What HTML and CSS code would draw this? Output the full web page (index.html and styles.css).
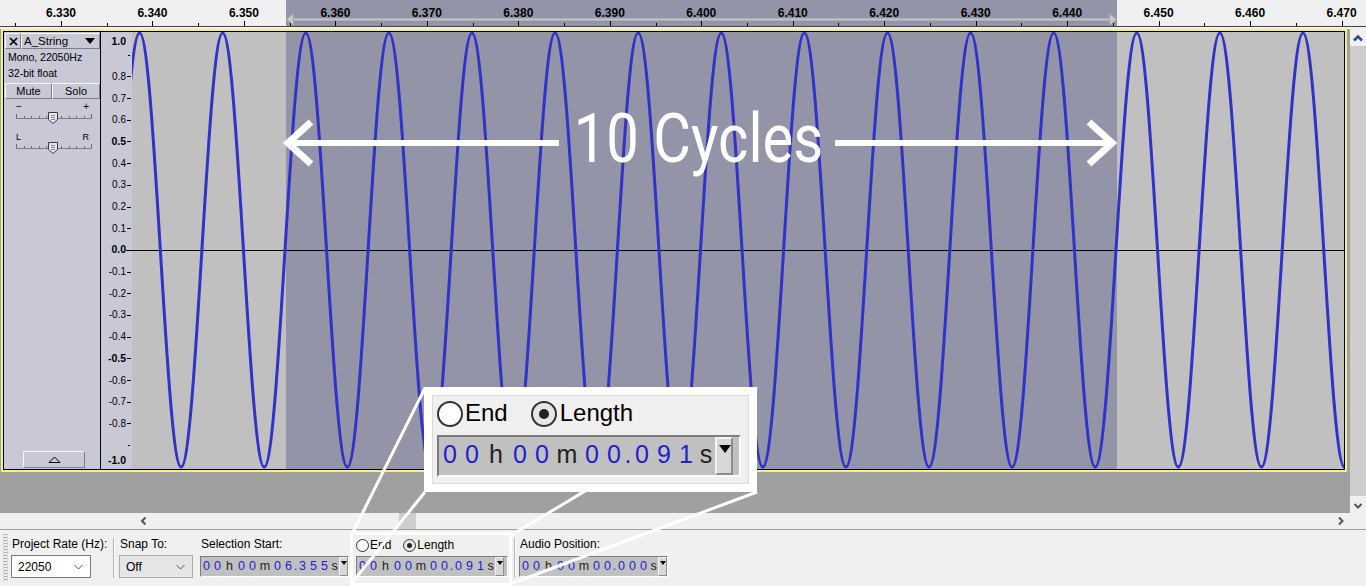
FILE: index.html
```html
<!DOCTYPE html>
<html lang="en">
<head>
    <meta charset="UTF-8">
    <title>A_String - Audacity</title>
    <meta name="viewport" content="width=device-width, initial-scale=1.0">
    <link rel="stylesheet" href="styles.css">
</head>
<body>
<div class="screen">

    <!-- timeline ruler -->
    <div class="ruler">
        <svg class="ruler-sel" width="831" height="26" viewBox="0 0 831 26">
            <line x1="7" y1="19.5" x2="824" y2="19.5" stroke="#c6c6c6" stroke-width="2"/>
            <polygon points="0.5,19.5 7.5,13.5 7.5,25.5" fill="#c8c8c8" stroke="#a6a6a6"/>
            <polygon points="830.5,19.5 823.5,13.5 823.5,25.5" fill="#c8c8c8" stroke="#a6a6a6"/>
        </svg>
        <div class="ruler-ticks">
            <span class="rt">6.330</span>
            <span class="rt">6.340</span>
            <span class="rt">6.350</span>
            <span class="rt">6.360</span>
            <span class="rt">6.370</span>
            <span class="rt">6.380</span>
            <span class="rt">6.390</span>
            <span class="rt">6.400</span>
            <span class="rt">6.410</span>
            <span class="rt">6.420</span>
            <span class="rt">6.430</span>
            <span class="rt">6.440</span>
            <span class="rt">6.450</span>
            <span class="rt">6.460</span>
            <span class="rt">6.470</span>
        </div>
    </div>

    <div class="tracks">
        <div class="track-area">
            <div class="track">
                <div class="track-in">

                    <!-- track control panel -->
                    <div class="tinfo">
                        <div class="ti-title">
                            <span class="ti-close bevel">
                                <svg width="9" height="9" viewBox="0 0 9 9"><path d="M1,1L8,8M8,1L1,8" stroke="#000" stroke-width="1.7"/></svg>
                            </span>
                            <span class="ti-name bevel">A_String<i class="ti-caret"></i></span>
                        </div>
                        <div class="ti-info">
                            <div>Mono, 22050Hz</div>
                            <div>32-bit float</div>
                        </div>
                        <div class="ti-buttons">
                            <span class="ti-btn bevel mute">Mute</span>
                            <span class="ti-btn bevel">Solo</span>
                        </div>
                        <div class="slider">
                            <div class="slider-labels"><span>&minus;</span><span>+</span></div>
                            <svg width="78" height="13" viewBox="0 0 78 13">
                                <line x1="0" y1="6.5" x2="76" y2="6.5" stroke="#7c7c84"/>
                                <path d="M0.5,2v4M8.5,4v2M15.5,4v2M23.5,4v2M30.5,4v2M45.5,4v2M53.5,4v2M60.5,4v2M68.5,4v2M75.5,2v4" stroke="#6c6c74"/>
                                <polygon points="32.5,0.5 41.5,0.5 41.5,7.5 37,11.5 32.5,7.5" fill="#e6e6ee" stroke="#3a3a40"/>
                                <path d="M35,3.5h4M35,5.5h4M35,7.5h4" stroke="#8a8a92"/>
                            </svg>
                        </div>
                        <div class="slider pan">
                            <div class="slider-labels"><span>L</span><span>R</span></div>
                            <svg width="78" height="13" viewBox="0 0 78 13">
                                <line x1="0" y1="6.5" x2="76" y2="6.5" stroke="#7c7c84"/>
                                <path d="M0.5,2v4M8.5,4v2M15.5,4v2M23.5,4v2M30.5,4v2M45.5,4v2M53.5,4v2M60.5,4v2M68.5,4v2M75.5,2v4" stroke="#6c6c74"/>
                                <polygon points="32.5,0.5 41.5,0.5 41.5,7.5 37,11.5 32.5,7.5" fill="#e6e6ee" stroke="#3a3a40"/>
                                <path d="M35,3.5h4M35,5.5h4M35,7.5h4" stroke="#8a8a92"/>
                            </svg>
                        </div>
                        <div class="ti-collapse bevel">
                            <svg width="13" height="7" viewBox="0 0 13 7"><polygon points="1,6.5 6.5,1 12,6.5" fill="none" stroke="#000"/></svg>
                        </div>
                    </div>

                    <!-- amplitude ruler -->
                    <div class="vruler">
                        <span class="vr-end top">1.0</span>
                        <div class="vr-list">
                            <span class="vr mark"></span>
                            <span class="vr">0.8</span>
                            <span class="vr">0.7</span>
                            <span class="vr">0.6</span>
                            <span class="vr bold">0.5</span>
                            <span class="vr">0.4</span>
                            <span class="vr">0.3</span>
                            <span class="vr">0.2</span>
                            <span class="vr">0.1</span>
                            <span class="vr bold zero">0.0</span>
                            <span class="vr">-0.1</span>
                            <span class="vr">-0.2</span>
                            <span class="vr">-0.3</span>
                            <span class="vr">-0.4</span>
                            <span class="vr bold">-0.5</span>
                            <span class="vr">-0.6</span>
                            <span class="vr">-0.7</span>
                            <span class="vr">-0.8</span>
                            <span class="vr mark"></span>
                        </div>
                        <span class="vr-end bottom">-1.0</span>
                    </div>

                    <!-- waveform -->
                    <div class="wave">
                        <svg width="1212" height="437" viewBox="0 0 1212 437">
                            <rect x="154" y="0" width="831" height="437" fill="#9494a8"/>
                            <line x1="0" y1="218.5" x2="1212" y2="218.5" stroke="#000"/>
                            <path fill="none" stroke="#3232c8" stroke-width="3"
                                d="M-13.2,218 c6.776,-111.2 13.256,-217 20.775,-217 s13.999,105.8 20.775,217 s13.256,217 20.775,217 s13.999,-105.8 20.775,-217
                                   s13.256,-217 20.775,-217 s13.999,105.8 20.775,217 s13.256,217 20.775,217 s13.999,-105.8 20.775,-217
                                   s13.256,-217 20.775,-217 s13.999,105.8 20.775,217 s13.256,217 20.775,217 s13.999,-105.8 20.775,-217
                                   s13.256,-217 20.775,-217 s13.999,105.8 20.775,217 s13.256,217 20.775,217 s13.999,-105.8 20.775,-217
                                   s13.256,-217 20.775,-217 s13.999,105.8 20.775,217 s13.256,217 20.775,217 s13.999,-105.8 20.775,-217
                                   s13.256,-217 20.775,-217 s13.999,105.8 20.775,217 s13.256,217 20.775,217 s13.999,-105.8 20.775,-217
                                   s13.256,-217 20.775,-217 s13.999,105.8 20.775,217 s13.256,217 20.775,217 s13.999,-105.8 20.775,-217
                                   s13.256,-217 20.775,-217 s13.999,105.8 20.775,217 s13.256,217 20.775,217 s13.999,-105.8 20.775,-217
                                   s13.256,-217 20.775,-217 s13.999,105.8 20.775,217 s13.256,217 20.775,217 s13.999,-105.8 20.775,-217
                                   s13.256,-217 20.775,-217 s13.999,105.8 20.775,217 s13.256,217 20.775,217 s13.999,-105.8 20.775,-217
                                   s13.256,-217 20.775,-217 s13.999,105.8 20.775,217 s13.256,217 20.775,217 s13.999,-105.8 20.775,-217
                                   s13.256,-217 20.775,-217 s13.999,105.8 20.775,217 s13.256,217 20.775,217 s13.999,-105.8 20.775,-217
                                   s13.256,-217 20.775,-217 s13.999,105.8 20.775,217 s13.256,217 20.775,217 s13.999,-105.8 20.775,-217
                                   s13.256,-217 20.775,-217 s13.999,105.8 20.775,217 s13.256,217 20.775,217 s13.999,-105.8 20.775,-217
                                   s13.256,-217 20.775,-217 s13.999,105.8 20.775,217 s13.256,217 20.775,217 s13.999,-105.8 20.775,-217"/>
                        </svg>
                    </div>
                </div>
            </div>
        </div>

        <div class="vscroll">
            <span class="sb-btn">
                <svg width="16" height="16" viewBox="0 0 16 16"><polyline points="4,10.5 8,6.5 12,10.5" fill="none" stroke="#2a4aa0" stroke-width="2.6"/></svg>
            </span>
            <span class="sb-thumb"></span>
            <span class="sb-btn">
                <svg width="16" height="16" viewBox="0 0 16 16"><polyline points="4.5,7 8,10.5 11.5,7" fill="none" stroke="#555" stroke-width="2"/></svg>
            </span>
        </div>
    </div>

    <div class="hscroll">
        <span class="hs-pad"></span>
        <span class="sb-btn">
            <svg width="16" height="16" viewBox="0 0 16 16"><polyline points="9.5,4.5 6,8 9.5,11.5" fill="none" stroke="#555" stroke-width="2"/></svg>
        </span>
        <span class="hs-track"><span class="hs-thumb"></span></span>
        <span class="sb-btn">
            <svg width="16" height="16" viewBox="0 0 16 16"><polyline points="6,4.5 9.5,8 6,11.5" fill="none" stroke="#555" stroke-width="2"/></svg>
        </span>
        <span class="hs-corner"></span>
    </div>

    <!-- selection toolbar -->
    <div class="toolbar">
        <div class="grip"></div>
        <div class="tb-group rate">
            <div class="tb-label">Project Rate (Hz):</div>
            <div class="combo">
                <span>22050</span>
                <svg width="9" height="6" viewBox="0 0 9 6"><polyline points="0.5,1 4.5,5 8.5,1" fill="none" stroke="#555"/></svg>
            </div>
        </div>
        <div class="tb-sep"></div>
        <div class="tb-group snap">
            <div class="tb-label">Snap To:</div>
            <div class="combo off">
                <span>Off</span>
                <svg width="9" height="6" viewBox="0 0 9 6"><polyline points="0.5,1 4.5,5 8.5,1" fill="none" stroke="#555"/></svg>
            </div>
        </div>
        <div class="tb-group start">
            <div class="tb-label">Selection Start:</div>
            <div class="tc">
                <span class="d">0</span><span class="d">0</span><span class="u uh">h</span><span class="d">0</span><span class="d">0</span><span class="u um">m</span><span class="d">0</span><span class="d">6</span><span class="dot">.</span><span class="d">3</span><span class="d">5</span><span class="d">5</span><span class="u us">s</span><span class="tc-btn"></span>
            </div>
        </div>
        <div class="len-frame">
            <div class="len-box">
                <div class="len-radios">
                    <span class="radio"></span><span>End</span>
                    <span class="radio on gap"></span><span>Length</span>
                </div>
                <div class="tc">
                    <span class="d">0</span><span class="d">0</span><span class="u uh">h</span><span class="d">0</span><span class="d">0</span><span class="u um">m</span><span class="d">0</span><span class="d">0</span><span class="dot">.</span><span class="d">0</span><span class="d">9</span><span class="d">1</span><span class="u us">s</span><span class="tc-btn"></span>
                </div>
            </div>
        </div>
        <div class="tb-sep"></div>
        <div class="tb-group position">
            <div class="tb-label">Audio Position:</div>
            <div class="tc">
                <span class="d">0</span><span class="d">0</span><span class="u uh">h</span><span class="d">0</span><span class="d">0</span><span class="u um">m</span><span class="d">0</span><span class="d">0</span><span class="dot">.</span><span class="d">0</span><span class="d">0</span><span class="d">0</span><span class="u us">s</span><span class="tc-btn"></span>
            </div>
        </div>
    </div>

    <!-- annotations -->
    <svg class="zoom-lines" width="1366" height="586" viewBox="0 0 1366 586">
        <line x1="425" y1="388" x2="351" y2="536"/>
        <line x1="425" y1="492" x2="351" y2="584"/>
        <line x1="757" y1="388" x2="510" y2="536"/>
        <line x1="757" y1="492" x2="510" y2="584"/>
    </svg>

    <div class="callout">
        <div class="len-box">
            <div class="len-radios">
                <span class="radio"></span><span>End</span>
                <span class="radio on gap"></span><span>Length</span>
            </div>
            <div class="tc">
                <span class="d">0</span><span class="d">0</span><span class="u uh">h</span><span class="d">0</span><span class="d">0</span><span class="u um">m</span><span class="d">0</span><span class="d">0</span><span class="dot">.</span><span class="d">0</span><span class="d">9</span><span class="d">1</span><span class="u us">s</span><span class="tc-btn"></span>
            </div>
        </div>
    </div>

    <div class="cycles">
        <svg width="276" height="69" viewBox="0 0 276 69">
            <line x1="8" y1="39" x2="276" y2="39" stroke="#fff" stroke-width="6"/>
            <polyline points="28,18 5,39 28,60" fill="none" stroke="#fff" stroke-width="7"/>
        </svg>
        <div class="cycles-text"><span>10 Cycles</span></div>
        <svg width="282" height="69" viewBox="0 0 282 69">
            <line x1="0" y1="39" x2="274" y2="39" stroke="#fff" stroke-width="6"/>
            <polyline points="254,18 277,39 254,60" fill="none" stroke="#fff" stroke-width="7"/>
        </svg>
    </div>
</div>
</body>
</html>
```

FILE: styles.css
```css
:root {
    --ui: #f0f0f0;
    --panel: #c8c8d6;
    --gray: #a0a0a0;
    --yellow: #f3ef8e;
    --digit: #2020d0;
}

body {
    margin: 0;
    background: var(--ui);
    font-family: "Liberation Sans", Arial, sans-serif;
    color: #000;
}

.screen {
    position: relative;
    width: 1366px;
    height: 586px;
    overflow: hidden;
}

/* timeline ruler */
.ruler {
    position: relative;
    height: 26px;
    border-bottom: 1px solid #444;
    margin-bottom: 2px;
    overflow: hidden;
    background: linear-gradient(to right, var(--ui) 286px, #9494a8 286px, #9494a8 1117px, var(--ui) 1117px);
}

.ruler-sel {
    position: absolute;
    left: 286px;
    top: 0;
}

.ruler-ticks {
    position: relative;
    display: flex;
    height: 26px;
    padding-left: 15.26px;
}

.rt {
    position: relative;
    flex: none;
    width: 91.48px;
    box-sizing: border-box;
    padding-top: 6px;
    text-align: center;
    font-weight: bold;
    font-size: 12px;
    line-height: 14px;
}

.rt::before,
.rt::after {
    content: "";
    position: absolute;
    bottom: 0;
    width: 1px;
    background: #000;
}

.rt::before {
    left: 0;
    height: 3px;
}

.rt::after {
    left: 50%;
    height: 5px;
}

/* tracks */
.tracks {
    display: flex;
    height: 484px;
}

.track-area {
    width: 1350px;
    box-sizing: border-box;
    padding-left: 1px;
    background: var(--gray);
}

.track {
    width: 1346px;
    height: 443px;
    box-sizing: border-box;
    border: 2px solid var(--yellow);
}

.track-in {
    display: flex;
    height: 100%;
    box-sizing: border-box;
    border: 1px solid #000;
}

.bevel {
    box-sizing: border-box;
    border: 1px solid;
    border-color: #f4f4fa #7e7e8a #7e7e8a #f4f4fa;
}

.tinfo {
    width: 96px;
    border-right: 1px solid #000;
    background: var(--panel);
    display: flex;
    flex-direction: column;
    font-size: 11px;
}

.ti-title {
    display: flex;
    height: 16px;
    margin: 1px 0 0 1px;
}

.ti-close {
    width: 16px;
    display: flex;
    align-items: center;
    justify-content: center;
}

.ti-name {
    flex: 1;
    display: flex;
    align-items: center;
    justify-content: space-between;
    padding: 0 4px 0 2px;
    font-size: 11.5px;
}

.ti-caret {
    width: 0;
    height: 0;
    border-left: 5px solid transparent;
    border-right: 5px solid transparent;
    border-top: 6px solid #000;
}

.ti-info {
    padding-left: 4px;
    font-size: 10.5px;
    line-height: 16px;
}

.ti-buttons {
    display: flex;
    height: 16px;
    margin: 2px 0 0 1px;
}

.ti-btn {
    flex: 1;
    display: flex;
    align-items: center;
    justify-content: center;
}

.ti-btn.mute {
    flex: none;
    width: 47px;
}

.slider {
    width: 78px;
    margin: 3px 0 0 12px;
}

.slider.pan {
    margin-top: 7px;
}

.slider-labels {
    display: flex;
    justify-content: space-between;
    width: 76px;
    box-sizing: border-box;
    padding-right: 3px;
    font-size: 10px;
    line-height: 10px;
}

.slider.pan .slider-labels {
    font-size: 9px;
}

.slider svg {
    display: block;
}

.ti-collapse {
    width: 62px;
    height: 17px;
    margin: auto 0 1px 19px;
    display: flex;
    align-items: center;
    justify-content: center;
}

/* amplitude ruler */
.vruler {
    position: relative;
    width: 31px;
    background: var(--panel);
    font-size: 10px;
}

.vr-list {
    display: flex;
    flex-direction: column;
    padding-top: 11.85px;
}

.vr {
    position: relative;
    height: 21.7px;
    display: flex;
    align-items: center;
    justify-content: flex-end;
    padding-right: 6px;
    line-height: 11px;
}

.vr::after {
    content: "";
    position: absolute;
    right: 1px;
    top: 50%;
    width: 4px;
    height: 1px;
    background: #000;
}

.vr.bold,
.vr-end {
    font-weight: bold;
    font-size: 10.5px;
}

.vr.zero::after {
    right: 0;
    width: 6px;
}

.vr.mark::after {
    right: 2px;
    width: 2px;
}

.vr-end {
    position: absolute;
    right: 6px;
    line-height: 12px;
}

.vr-end.top {
    top: 3px;
}

.vr-end.bottom {
    bottom: 3px;
}

.wave {
    flex: 1;
    overflow: hidden;
    background: #c0c0c0;
}

.wave svg {
    display: block;
}

/* scrollbars */
.vscroll {
    width: 16px;
    display: flex;
    flex-direction: column;
    background: var(--ui);
}

.sb-btn {
    flex: none;
    width: 16px;
    height: 17px;
    display: flex;
    align-items: center;
    justify-content: center;
}

.sb-thumb {
    flex: 1;
    background: #cdcdcd;
}

.hscroll {
    display: flex;
    height: 16px;
    background: var(--ui);
}

.hscroll .sb-btn {
    height: 16px;
}

.hs-pad {
    width: 136px;
}

.hs-track {
    flex: 1;
    display: flex;
}

.hs-thumb {
    width: 17px;
    margin-left: 247px;
    background: #cdcdcd;
}

.hs-corner {
    width: 17px;
}

/* selection toolbar */
.toolbar {
    display: flex;
    align-items: flex-start;
    height: 56px;
    border-top: 1px solid var(--gray);
    font-size: 12px;
}

.grip {
    width: 3px;
    height: 48px;
    margin: 4px 0 0 3px;
    border-left: 1px solid #d8d8d8;
    border-right: 1px solid #d8d8d8;
    background: repeating-linear-gradient(to bottom, #a8a8a8 0 1px, transparent 1px 3px);
}

.tb-group {
    margin: 6px 0 0 7px;
}

.tb-group.rate {
    width: 100px;
    margin-left: 3px;
}

.tb-group.snap {
    width: 74px;
    margin-left: 4px;
}

.tb-group.position {
    margin-left: 3px;
}

.tb-label {
    height: 16px;
    line-height: 16px;
    padding-left: 1px;
    white-space: nowrap;
}

.tb-sep {
    width: 1px;
    height: 40px;
    margin: 8px 0 0 2px;
    background: #b4b4b4;
    border-right: 1px solid #fff;
}

.combo {
    display: flex;
    align-items: center;
    justify-content: space-between;
    width: 80px;
    height: 23px;
    margin-top: 3px;
    box-sizing: border-box;
    padding: 0 7px 0 6px;
    background: #fff;
    border: 1px solid #7a7a7a;
}

.combo.off {
    width: 74px;
    background: #e5e5e5;
    border-color: #adadad;
}

.tb-group .tc {
    margin-top: 4px;
}

.tc {
    display: flex;
    align-items: center;
    height: 21px;
    box-sizing: border-box;
    border: 1px solid;
    border-color: #7c7c7c #ffffff #ffffff #7c7c7c;
    background: #c0c0c0;
    font-size: 12.5px;
    line-height: 15px;
}

.tc .d,
.tc .dot {
    color: var(--digit);
    text-align: center;
}

.tc .d {
    width: 11px;
}

.tc .dot {
    width: 3px;
    display: flex;
    justify-content: center;
}

.tc .u {
    color: #222;
    text-align: center;
}

.tc .uh {
    width: 13px;
}

.tc .um {
    width: 14px;
}

.tc .us {
    width: 9px;
}

.tc-btn {
    align-self: stretch;
    width: 9px;
    box-sizing: border-box;
    border: 1px solid;
    border-color: #f4f4f4 #8c8c8c #8c8c8c #f4f4f4;
    background: #d8d8d8;
    display: flex;
    justify-content: center;
    padding-top: 3px;
}

.tc-btn::after {
    content: "";
    width: 0;
    height: 0;
    border-left: 3.5px solid transparent;
    border-right: 3.5px solid transparent;
    border-top: 4px solid #000;
}

/* End / Length group and its zoomed copy */
.len-frame {
    width: 162px;
    height: 54px;
    margin: 2px 0 0 1px;
    box-sizing: border-box;
    border: 3px solid #fff;
    padding: 2px 0 0 3px;
}

.len-box {
    width: 152px;
}

.len-radios {
    display: flex;
    align-items: center;
    height: 16px;
    font-size: 12px;
}

.radio {
    width: 13px;
    height: 13px;
    box-sizing: border-box;
    margin-right: 1px;
    border: 1px solid #333;
    border-radius: 50%;
    background: #fff;
    display: flex;
    align-items: center;
    justify-content: center;
}

.radio.gap {
    margin-left: 12px;
}

.radio.on {
    background: #e6e6e6;
}

.radio.on::after {
    content: "";
    width: 5px;
    height: 5px;
    border-radius: 50%;
    background: #222;
}

.len-box .tc {
    margin-top: 3px;
}

.zoom-lines {
    position: absolute;
    left: 0;
    top: 0;
    z-index: 5;
    pointer-events: none;
}

.zoom-lines line {
    stroke: #fff;
    stroke-width: 3;
}

.callout {
    position: absolute;
    left: 424px;
    top: 387px;
    z-index: 6;
    width: 317px;
    height: 89px;
    border: 8px solid #fff;
    background: var(--ui);
    box-shadow: inset 0 0 0 1px #dadada;
}

.callout .len-box {
    margin: 2px 0 0 5px;
    transform: scale(2);
    transform-origin: 0 0;
}

.cycles {
    position: absolute;
    left: 283px;
    top: 104px;
    z-index: 4;
    display: flex;
    height: 69px;
}

.cycles svg {
    display: block;
}

.cycles-text {
    width: 247px;
    margin: 0 13px 0 16px;
    display: flex;
    justify-content: center;
    color: #fff;
    font-family: Roboto, "Open Sans", sans-serif;
    font-size: 69px;
    line-height: 69px;
    white-space: nowrap;
}

.cycles-text span {
    display: inline-block;
    transform: scaleX(0.84);
}
```
